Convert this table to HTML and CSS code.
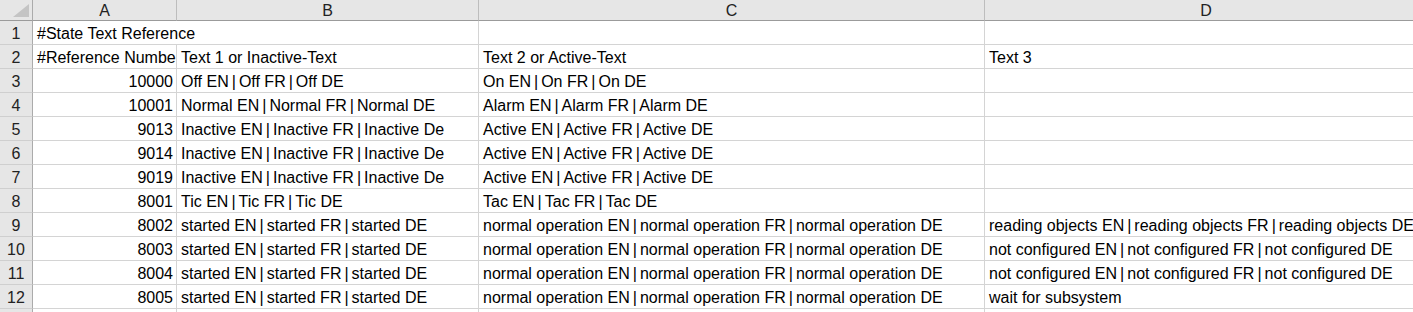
FILE: index.html
```html
<!DOCTYPE html>
<html>
<head>
<meta charset="utf-8">
<link rel="stylesheet" href="styles.css">
</head>
<body>
<div class="sheet">
  <div class="corner"><span class="tri"></span></div>
  <div class="colhead">A</div>
  <div class="colhead">B</div>
  <div class="colhead">C</div>
  <div class="colhead">D</div>

  <div class="rowhead">1</div>
  <div class="cell span2">#State Text Reference</div>
  <div class="cell"></div>
  <div class="cell"></div>

  <div class="rowhead">2</div>
  <div class="cell">#Reference Number</div>
  <div class="cell">Text 1 or Inactive-Text</div>
  <div class="cell">Text 2 or Active-Text</div>
  <div class="cell">Text 3</div>

  <div class="rowhead">3</div>
  <div class="cell num">10000</div>
  <div class="cell">Off EN<span class="p">|</span>Off FR<span class="p">|</span>Off DE</div>
  <div class="cell">On EN<span class="p">|</span>On FR<span class="p">|</span>On DE</div>
  <div class="cell"></div>

  <div class="rowhead">4</div>
  <div class="cell num">10001</div>
  <div class="cell">Normal EN<span class="p">|</span>Normal FR<span class="p">|</span>Normal DE</div>
  <div class="cell">Alarm EN<span class="p">|</span>Alarm FR<span class="p">|</span>Alarm DE</div>
  <div class="cell"></div>

  <div class="rowhead">5</div>
  <div class="cell num">9013</div>
  <div class="cell">Inactive EN<span class="p">|</span>Inactive FR<span class="p">|</span>Inactive De</div>
  <div class="cell">Active EN<span class="p">|</span>Active FR<span class="p">|</span>Active DE</div>
  <div class="cell"></div>

  <div class="rowhead">6</div>
  <div class="cell num">9014</div>
  <div class="cell">Inactive EN<span class="p">|</span>Inactive FR<span class="p">|</span>Inactive De</div>
  <div class="cell">Active EN<span class="p">|</span>Active FR<span class="p">|</span>Active DE</div>
  <div class="cell"></div>

  <div class="rowhead">7</div>
  <div class="cell num">9019</div>
  <div class="cell">Inactive EN<span class="p">|</span>Inactive FR<span class="p">|</span>Inactive De</div>
  <div class="cell">Active EN<span class="p">|</span>Active FR<span class="p">|</span>Active DE</div>
  <div class="cell"></div>

  <div class="rowhead">8</div>
  <div class="cell num">8001</div>
  <div class="cell">Tic EN<span class="p">|</span>Tic FR<span class="p">|</span>Tic DE</div>
  <div class="cell">Tac EN<span class="p">|</span>Tac FR<span class="p">|</span>Tac DE</div>
  <div class="cell"></div>

  <div class="rowhead">9</div>
  <div class="cell num">8002</div>
  <div class="cell">started EN<span class="p">|</span>started FR<span class="p">|</span>started DE</div>
  <div class="cell">normal operation EN<span class="p">|</span>normal operation FR<span class="p">|</span>normal operation DE</div>
  <div class="cell">reading objects EN<span class="p">|</span>reading objects FR<span class="p">|</span>reading objects DE</div>

  <div class="rowhead">10</div>
  <div class="cell num">8003</div>
  <div class="cell">started EN<span class="p">|</span>started FR<span class="p">|</span>started DE</div>
  <div class="cell">normal operation EN<span class="p">|</span>normal operation FR<span class="p">|</span>normal operation DE</div>
  <div class="cell">not configured EN<span class="p">|</span>not configured FR<span class="p">|</span>not configured DE</div>

  <div class="rowhead">11</div>
  <div class="cell num">8004</div>
  <div class="cell">started EN<span class="p">|</span>started FR<span class="p">|</span>started DE</div>
  <div class="cell">normal operation EN<span class="p">|</span>normal operation FR<span class="p">|</span>normal operation DE</div>
  <div class="cell">not configured EN<span class="p">|</span>not configured FR<span class="p">|</span>not configured DE</div>

  <div class="rowhead">12</div>
  <div class="cell num">8005</div>
  <div class="cell">started EN<span class="p">|</span>started FR<span class="p">|</span>started DE</div>
  <div class="cell">normal operation EN<span class="p">|</span>normal operation FR<span class="p">|</span>normal operation DE</div>
  <div class="cell">wait for subsystem</div>

  <div class="rowhead"></div>
  <div class="cell"></div>
  <div class="cell"></div>
  <div class="cell"></div>
  <div class="cell"></div>
</div>
</body>
</html>
```

FILE: styles.css
```css
html, body {
  margin: 0;
  padding: 0;
  background: #ffffff;
  overflow: hidden;
}

body {
  width: 1413px;
  height: 312px;
  font-family: "Liberation Sans", Arial, sans-serif;
  font-size: 16px;
  color: #000;
}

.sheet {
  display: grid;
  grid-template-columns: 33px 144px 302px 506px 443px;
  grid-template-rows: 21px;
  grid-auto-rows: 24px;
  width: 1428px;
}

.corner,
.colhead,
.rowhead,
.cell {
  box-sizing: border-box;
  white-space: nowrap;
  overflow: hidden;
}

.corner {
  position: relative;
  background: #e6e6e6;
  border-right: 1px solid #ababab;
  border-bottom: 1px solid #9b9b9b;
}

.tri {
  position: absolute;
  right: 3px;
  bottom: 3px;
  width: 0;
  height: 0;
  border-left: 16px solid transparent;
  border-bottom: 13px solid #c4c4c4;
}

.colhead {
  background: #e6e6e6;
  border-right: 1px solid #bdbdbd;
  border-bottom: 1px solid #9b9b9b;
  text-align: center;
  padding-top: 1px;
  line-height: 19px;
  color: #222;
}

.rowhead {
  background: #e6e6e6;
  border-right: 1px solid #ababab;
  border-bottom: 1px solid #cfcfcf;
  text-align: center;
  padding-top: 2px;
  line-height: 21px;
  color: #222;
}

.cell {
  border-right: 1px solid #d4d4d4;
  border-bottom: 1px solid #d4d4d4;
  padding: 2px 3px 0 4px;
  line-height: 21px;
}

.span2 {
  grid-column: span 2;
}

.num {
  text-align: right;
}

.p {
  margin: 0 3px;
}
```
